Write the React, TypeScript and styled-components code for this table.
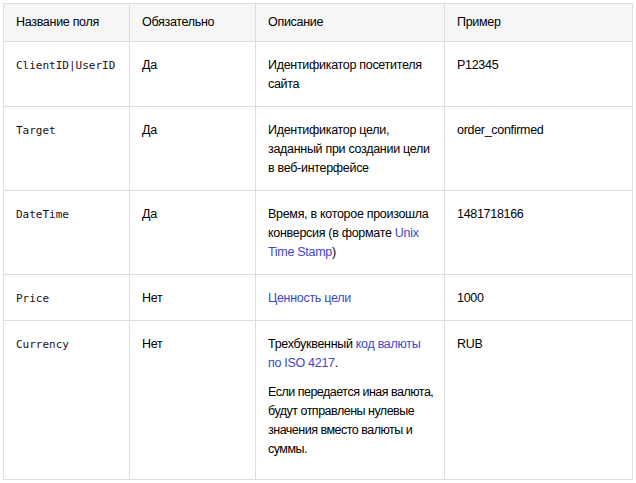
import React from "react";
import styled, { createGlobalStyle } from "styled-components";

const Global = createGlobalStyle`
  html, body { margin: 0; padding: 0; background: #fff; }
  body { padding: 3px 0 0 3px; font-family: "Liberation Sans", Arial, sans-serif; }
`;

const Table = styled.table`
  border-collapse: collapse;
  table-layout: fixed;
  width: 629px;
  font-size: 12.5px;
  line-height: 19px;
  color: #000;
  letter-spacing: -0.3px;
`;

const HeadCell = styled.th`
  background: #f6f6f6;
  border: 1px solid #ddd;
  text-align: left;
  font-weight: 400;
  padding: 9px 12px 9px 12px;
  vertical-align: top;
`;

const Cell = styled.td`
  border: 1px solid #ddd;
  padding: 14px 12px 12px 12px;
  vertical-align: top;
`;

const Code = styled.code`
  font-family: "DejaVu Sans Mono", "Liberation Mono", monospace;
  font-size: 11px;
  letter-spacing: 0;
  color: #1a1020;
`;

const Link = styled.a`
  color: #3d47c8;
  text-decoration: none;
`;

const Para = styled.p<{ $tight?: boolean }>`
  margin: 0;
  white-space: nowrap;
  letter-spacing: ${(p) => (p.$tight ? "-0.5px" : "inherit")};
  & + & { margin-top: 10px; }
`;

type Row = {
  name: React.ReactNode;
  req: string;
  desc: React.ReactNode;
  example: string;
  extra?: number;
};

const rows: Row[] = [
  { name: "ClientID|UserID", req: "Да", desc: "Идентификатор посетителя сайта", example: "P12345" },
  { name: "Target", req: "Да", desc: "Идентификатор цели, заданный при создании цели в веб-интерфейсе", example: "order_confirmed" },
  {
    name: "DateTime",
    req: "Да",
    desc: (
      <>
        Время, в которое произошла конверсия (в формате <Link href="#">Unix Time Stamp</Link>)
      </>
    ),
    example: "1481718166",
  },
  { name: "Price", req: "Нет", desc: <Link href="#">Ценность цели</Link>, example: "1000" },
  {
    name: "Currency",
    req: "Нет",
    desc: (
      <>
        <Para>
          Трехбуквенный <Link href="#">код валюты<br />по ISO 4217</Link>.
        </Para>
        <Para $tight>
          Если передается иная валюта,
          <br />
          будут отправлены нулевые
          <br />
          значения вместо валюты и
          <br />
          суммы.
        </Para>
      </>
    ),
    example: "RUB",
    extra: 8,
  },
];

const BottomPad = styled.div<{ $h: number }>`
  height: ${(p) => p.$h}px;
`;

export default function App() {
  return (
    <>
      <Global />
      <Table>
        <colgroup>
          <col style={{ width: 126 }} />
          <col style={{ width: 126 }} />
          <col style={{ width: 189 }} />
          <col style={{ width: 188 }} />
        </colgroup>
        <thead>
          <tr>
            <HeadCell>Название поля</HeadCell>
            <HeadCell>Обязательно</HeadCell>
            <HeadCell>Описание</HeadCell>
            <HeadCell>Пример</HeadCell>
          </tr>
        </thead>
        <tbody>
          {rows.map((r, i) => (
            <tr key={i}>
              <Cell>
                <Code>{r.name}</Code>
              </Cell>
              <Cell>{r.req}</Cell>
              <Cell>
                {r.desc}
                {r.extra ? <BottomPad $h={r.extra} /> : null}
              </Cell>
              <Cell>{r.example}</Cell>
            </tr>
          ))}
        </tbody>
      </Table>
    </>
  );
}
